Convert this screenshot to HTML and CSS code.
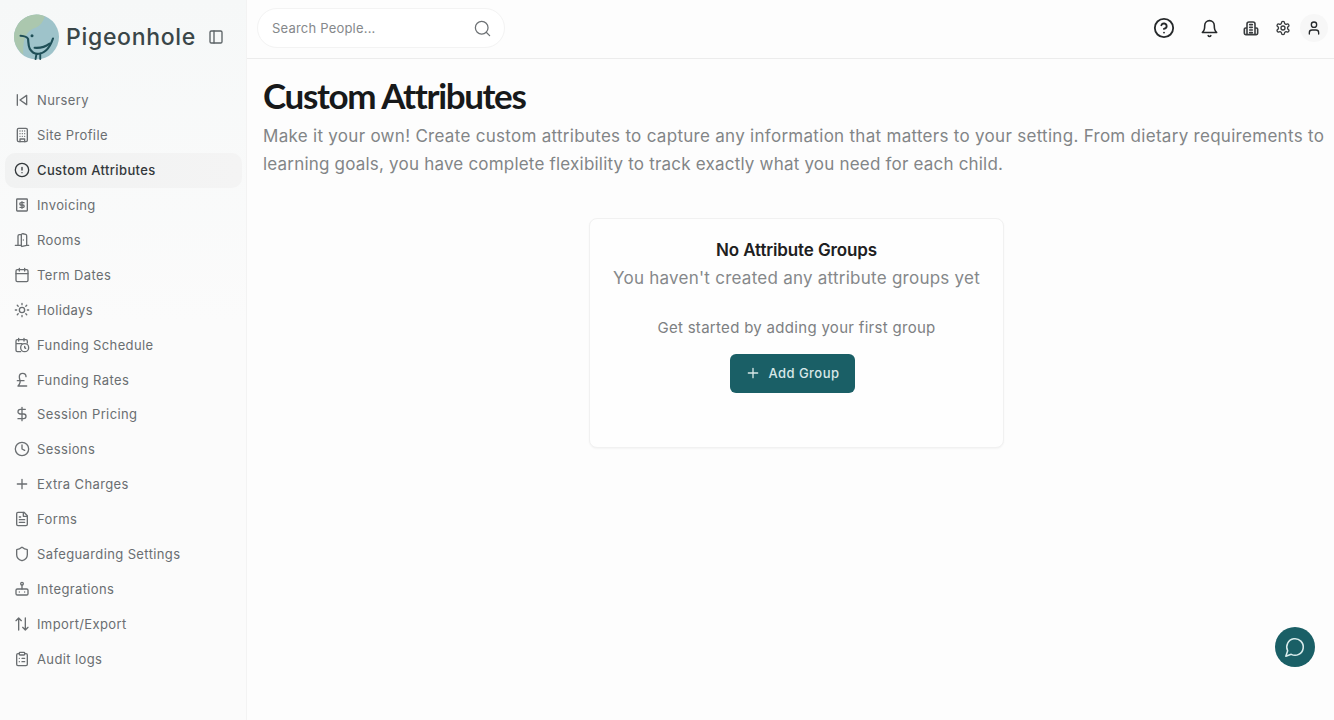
FILE: index.html
```html
<!DOCTYPE html>
<html lang="en">

<head>
    <meta charset="UTF-8">
    <meta name="viewport" content="width=device-width, initial-scale=1.0">
    <title>Custom Attributes</title>
    <link rel="stylesheet" href="styles.css">
</head>

<body>
    <div class="app">
        <aside class="sidebar">
            <div class="brand">
                <svg class="brand-logo" viewBox="0 0 48 48">
                    <circle cx="24" cy="24" r="24" fill="#9ec3ca"/>
                    <path d="M0 24A24 24 0 0 1 24 0c3 0 6 .5 9 2-2 6-5 10-10 12C14 17 9 24 10 43 4 38 0 31 0 24z" fill="#abc7ae"/>
                    <path d="M7 22.700c4 .3 7 1.300 8 3.300.5 4 0 7 2 11 2 3 5 5 8 5 7 0 13-6 16.600-16.400" fill="none" stroke="#1f4f57" stroke-width="2.300" stroke-linecap="round"/>
                    <path d="M22 35.500c6 .5 12-1.500 16-4.500" fill="none" stroke="#1f4f57" stroke-width="2.300" stroke-linecap="round"/>
                    <path d="M24 42l-1 5.500M28 41.500v6" stroke="#1f4f57" stroke-width="2" stroke-linecap="round"/>
                    <circle cx="19.200" cy="22.700" r="1.600" fill="#1f4f57"/>
                </svg>
                <span class="brand-name">Pigeonhole</span>
                <svg class="icon brand-toggle" viewBox="0 0 24 24"><rect x="3" y="3" width="18" height="18" rx="2"/><path d="M9 3v18"/></svg>
            </div>
            <ul class="nav">
                <li class="nav-item">
                    <svg class="icon" viewBox="0 0 24 24"><path d="M5 4v16"/><path d="M19 5v14l-10-7z"/></svg>
                    Nursery
                </li>
                <li class="nav-item">
                    <svg class="icon" viewBox="0 0 24 24"><rect x="5" y="2" width="15" height="20" rx="2"/><path d="M9 22v-4h7v4M9 6h.01M12.500 6h.01M16 6h.01M9 10h.01M12.500 10h.01M16 10h.01M9 14h.01M12.500 14h.01M16 14h.01"/></svg>
                    Site Profile
                </li>
                <li class="nav-item active">
                    <svg class="icon" viewBox="0 0 24 24"><circle cx="12" cy="12" r="10"/><path d="M12 8v4M12 16h.01"/></svg>
                    Custom Attributes
                </li>
                <li class="nav-item">
                    <svg class="icon" viewBox="0 0 24 24"><rect x="4" y="3" width="16" height="18" rx="1"/><path d="M15 8.500H10.500a1.750 1.750 0 0 0 0 3.500h3a1.750 1.750 0 0 1 0 3.500H9M12 7v10"/></svg>
                    Invoicing
                </li>
                <li class="nav-item">
                    <svg class="icon" viewBox="0 0 24 24"><path d="M11 20H2M11 4.600v16.100a1 1 0 0 0 1.200 1L19 20V5.600a2 2 0 0 0-1.500-2l-4-1A2 2 0 0 0 11 4.600zM11 4H8a2 2 0 0 0-2 2v14M14 12h.01M22 20h-3"/></svg>
                    Rooms
                </li>
                <li class="nav-item">
                    <svg class="icon" viewBox="0 0 24 24"><rect x="3" y="4" width="18" height="18" rx="2"/><path d="M8 2v4M16 2v4M3 10h18"/></svg>
                    Term Dates
                </li>
                <li class="nav-item">
                    <svg class="icon" viewBox="0 0 24 24"><circle cx="12" cy="12" r="4"/><path d="M12 2v2M12 20v2M4.900 4.900l1.400 1.400M17.700 17.700l1.400 1.400M2 12h2M20 12h2M6.300 17.700l-1.400 1.400M19.100 4.900l-1.400 1.400"/></svg>
                    Holidays
                </li>
                <li class="nav-item">
                    <svg class="icon" viewBox="0 0 24 24"><path d="M10 22H5a2 2 0 0 1-2-2V6a2 2 0 0 1 2-2h13a2 2 0 0 1 2 2v3M15 2v4M7 2v4M3 10h9"/><circle cx="16" cy="16" r="6"/><path d="M16 14v2l1.500 1"/></svg>
                    Funding Schedule
                </li>
                <li class="nav-item">
                    <svg class="icon" viewBox="0 0 24 24"><path d="M18 7a5 5 0 0 0-10 0c0 4 2 6 1 9-.5 2-2 4-3 5h13M5 13h10"/></svg>
                    Funding Rates
                </li>
                <li class="nav-item">
                    <svg class="icon" viewBox="0 0 24 24"><path d="M12 2v20M17 5H9.500a3.500 3.500 0 0 0 0 7h5a3.500 3.500 0 0 1 0 7H6"/></svg>
                    Session Pricing
                </li>
                <li class="nav-item">
                    <svg class="icon" viewBox="0 0 24 24"><circle cx="12" cy="12" r="10"/><path d="M12 6v6l4 2"/></svg>
                    Sessions
                </li>
                <li class="nav-item">
                    <svg class="icon" viewBox="0 0 24 24"><path d="M5 12h14M12 5v14"/></svg>
                    Extra Charges
                </li>
                <li class="nav-item">
                    <svg class="icon" viewBox="0 0 24 24"><path d="M15 2H6a2 2 0 0 0-2 2v16a2 2 0 0 0 2 2h12a2 2 0 0 0 2-2V7z"/><path d="M14 2v6h6M8 13h8M8 17h8M8 9h2"/></svg>
                    Forms
                </li>
                <li class="nav-item">
                    <svg class="icon" viewBox="0 0 24 24"><path d="M20 13c0 5-3.500 7.500-7.700 9a1 1 0 0 1-.6 0C7.500 20.500 4 18 4 13V6a1 1 0 0 1 1-1c2 0 4.500-1.200 6.200-2.700a1.200 1.200 0 0 1 1.600 0C14.500 3.800 17 5 19 5a1 1 0 0 1 1 1z"/></svg>
                    Safeguarding Settings
                </li>
                <li class="nav-item">
                    <svg class="icon" viewBox="0 0 24 24"><rect x="3" y="12" width="18" height="9" rx="2"/><path d="M12 12V6M8 16.500h.01M16 16.500h.01"/><circle cx="12" cy="4" r="2"/></svg>
                    Integrations
                </li>
                <li class="nav-item">
                    <svg class="icon" viewBox="0 0 24 24"><path d="M7 21V3M3 7l4-4 4 4M17 3v18M13 17l4 4 4-4"/></svg>
                    Import/Export
                </li>
                <li class="nav-item">
                    <svg class="icon" viewBox="0 0 24 24"><rect x="8" y="2" width="8" height="4" rx="1"/><path d="M16 4h2a2 2 0 0 1 2 2v14a2 2 0 0 1-2 2H6a2 2 0 0 1-2-2V6a2 2 0 0 1 2-2h2M12 11h4M12 16h4M8 11h.01M8 16h.01"/></svg>
                    Audit logs
                </li>
            </ul>
        </aside>

        <div class="page">
            <header class="topbar">
                <div class="search">
                    <span class="search-text">Search People...</span>
                    <svg class="icon search-icon" viewBox="0 0 24 24"><circle cx="11" cy="11" r="8"/><path d="M21 21l-4.300-4.300"/></svg>
                </div>
                <div class="top-actions">
                    <svg class="icon top-help" viewBox="0 0 24 24"><circle cx="12" cy="12" r="10"/><path d="M9.100 9a3 3 0 0 1 5.800 1c0 2-3 3-3 3M12 17h.01"/></svg>
                    <svg class="icon top-bell" viewBox="0 0 24 24"><path d="M6 8a6 6 0 0 1 12 0c0 7 3 9 3 9H3s3-2 3-9"/><path d="M10.300 21a1.900 1.900 0 0 0 3.400 0"/></svg>
                    <svg class="icon top-building" viewBox="0 0 24 24"><path d="M6 22V6a3 3 0 0 1 3-3h6a3 3 0 0 1 3 3v16M6 12H4a2 2 0 0 0-2 2v6a2 2 0 0 0 2 2h16a2 2 0 0 0 2-2v-6a2 2 0 0 0-2-2h-2M10 7h4M10 11h4M10 15h4M10 19h4"/></svg>
                    <svg class="icon top-gear" viewBox="0 0 24 24"><path d="M12.200 2h-.4a2 2 0 0 0-2 2v.2a2 2 0 0 1-1 1.700l-.4.300a2 2 0 0 1-2 0l-.2-.1a2 2 0 0 0-2.700.700l-.2.400a2 2 0 0 0 .7 2.700l.2.100a2 2 0 0 1 1 1.700v.6a2 2 0 0 1-1 1.700l-.2.100a2 2 0 0 0-.7 2.700l.2.400a2 2 0 0 0 2.700.7l.2-.1a2 2 0 0 1 2 0l.4.300a2 2 0 0 1 1 1.700v.2a2 2 0 0 0 2 2h.4a2 2 0 0 0 2-2v-.2a2 2 0 0 1 1-1.700l.4-.3a2 2 0 0 1 2 0l.2.100a2 2 0 0 0 2.700-.7l.2-.4a2 2 0 0 0-.7-2.700l-.2-.1a2 2 0 0 1-1-1.700v-.6a2 2 0 0 1 1-1.700l.2-.1a2 2 0 0 0 .7-2.700l-.2-.4a2 2 0 0 0-2.700-.7l-.2.100a2 2 0 0 1-2 0l-.4-.3a2 2 0 0 1-1-1.700V4a2 2 0 0 0-2-2z"/><circle cx="12" cy="12" r="3"/></svg>
                    <span class="avatar">
                        <svg class="icon" viewBox="0 0 24 24"><path d="M19 21v-2a4 4 0 0 0-4-4H9a4 4 0 0 0-4 4v2"/><circle cx="12" cy="7" r="4"/></svg>
                    </span>
                </div>
            </header>

            <main class="content">
                <h1 class="title">Custom Attributes</h1>
                <p class="intro"><span class="intro-first">Make it your own! Create custom attributes to capture any information that matters to your setting. From dietary requirements to</span> learning goals, you have complete flexibility to track exactly what you need for each child.</p>

                <div class="empty-wrap">
                    <section class="empty-card">
                        <h2 class="empty-title">No Attribute Groups</h2>
                        <p class="empty-sub">You haven't created any attribute groups yet</p>
                        <p class="empty-hint">Get started by adding your first group</p>
                        <button class="add-btn">
                            <svg class="icon" viewBox="0 0 24 24"><path d="M5 12h14M12 5v14"/></svg>
                            Add Group
                        </button>
                    </section>
                </div>
            </main>
        </div>
    </div>

    <button class="chat-btn">
        <svg class="icon chat-icon" viewBox="0 0 24 24"><path d="M7.900 20A9 9 0 1 0 4 16.100L2 22z"/></svg>
    </button>
</body>

</html>
```

FILE: styles.css
```css
html,
body {
    margin: 0;
    width: 100%;
    height: 100%;
}

body {
    font-family: Inter, "Liberation Sans", sans-serif;
    background: #fdfdfd;
    overflow: hidden;
}

.app {
    display: flex;
    height: 720px;
}

.icon {
    width: 16px;
    height: 16px;
    flex: none;
    fill: none;
    stroke: currentColor;
    stroke-width: 2;
    stroke-linecap: round;
    stroke-linejoin: round;
}

/* sidebar */
.sidebar {
    width: 246px;
    flex: none;
    background: linear-gradient(#f6f8f8, #fbfbfb 45%);
    border-right: 1px solid #f3f3f3;
}

.brand {
    display: flex;
    align-items: center;
    height: 60px;
    padding: 14px 0 0 14px;
    box-sizing: border-box;
}

.brand-logo {
    width: 45px;
    height: 46px;
    flex: none;
}

.brand-name {
    margin-left: 7px;
    font-size: 23px;
    font-weight: 500;
    letter-spacing: 0.7px;
    color: #3a4648;
}

.brand-toggle {
    margin-left: 12px;
    color: #5c6366;
}

.nav {
    list-style: none;
    margin: 23px 0 0;
    padding: 0 4px 0 5px;
}

.nav-item {
    display: flex;
    align-items: center;
    gap: 7px;
    height: 34.900px;
    padding-left: 9px;
    font-size: 13px;
    letter-spacing: 0.38px;
    color: #6a6e71;
    border-radius: 10px;
}

.nav-item.active {
    background: linear-gradient(90deg, #f1f2f2, #f4f4f4);
    color: #33383b;
    font-weight: 500;
}

/* top bar */
.page {
    flex: 1;
    min-width: 0;
    display: flex;
    flex-direction: column;
}

.topbar {
    display: flex;
    align-items: center;
    justify-content: space-between;
    height: 59px;
    flex: none;
    box-sizing: border-box;
    padding: 0 6px 2px 10px;
    border-bottom: 1px solid #ececec;
}

.search {
    display: flex;
    align-items: center;
    justify-content: space-between;
    width: 248px;
    height: 40px;
    box-sizing: border-box;
    padding: 0 12px 0 14px;
    background: #fff;
    border: 1px solid #f3f3f3;
    border-radius: 20px;
}

.search-text {
    font-size: 13px;
    letter-spacing: 0.2px;
    color: #85888b;
}

.search-icon {
    width: 19px;
    height: 19px;
    stroke-width: 1.600;
    color: #6d7174;
}

.top-actions {
    display: flex;
    align-items: center;
    color: #26292b;
}

.top-help {
    width: 22px;
    height: 22px;
}

.top-bell {
    width: 19px;
    height: 19px;
    margin-left: 25px;
}

.top-building {
    margin-left: 24px;
    stroke-width: 2.400;
    color: #3a3d3f;
}

.top-gear {
    margin-left: 16px;
    color: #3a3d3f;
}

.avatar {
    display: flex;
    align-items: center;
    justify-content: center;
    width: 28px;
    height: 28px;
    margin-left: 9px;
    border-radius: 50%;
    background: #f7f7f7;
}

/* content */
.content {
    flex: 1;
    padding: 16px 0 0 16px;
}

.title {
    margin: 0;
    font-family: Lato, Inter, sans-serif;
    font-size: 35px;
    line-height: 40px;
    font-weight: 700;
    letter-spacing: -1.350px;
    color: #17191a;
}

.intro {
    margin: 7px 0 0;
    width: 1068px;
    font-size: 17px;
    line-height: 28px;
    letter-spacing: 0.2px;
    color: #828587;
}

.intro-first {
    letter-spacing: 0.29px;
}

.empty-wrap {
    display: flex;
    justify-content: center;
    margin-top: 40px;
    padding-right: 4px;
}

.empty-card {
    width: 415px;
    height: 230px;
    box-sizing: border-box;
    padding-top: 20px;
    text-align: center;
    background: #fefefe;
    border: 1px solid #f1f1f1;
    border-radius: 8px;
    box-shadow: 0 1px 2px rgba(0, 0, 0, 0.04);
}

.empty-title {
    margin: 0;
    font-size: 17px;
    line-height: 22px;
    font-weight: 600;
    letter-spacing: -0.13px;
    color: #1d2021;
}

.empty-sub {
    margin: 6px 0 0;
    font-size: 17px;
    line-height: 22px;
    letter-spacing: 0.25px;
    color: #85888a;
}

.empty-hint {
    margin: 29px 0 0;
    font-size: 15px;
    line-height: 20px;
    letter-spacing: 0.3px;
    color: #7d8082;
}

.add-btn {
    display: inline-flex;
    align-items: center;
    gap: 8px;
    width: 125px;
    height: 39px;
    margin: 16px 9px 0 0;
    padding: 0 0 1px 15px;
    font-family: inherit;
    font-size: 13px;
    font-weight: 500;
    letter-spacing: 0.45px;
    color: #d8e8e8;
    background: #1a5f66;
    border: 0;
    border-radius: 6px;
}

.chat-btn {
    position: fixed;
    left: 1275px;
    top: 627px;
    display: flex;
    align-items: center;
    justify-content: center;
    width: 40px;
    height: 40px;
    padding: 0;
    color: #d9ecec;
    background: #1a5f66;
    border: 0;
    border-radius: 50%;
}

.chat-icon {
    width: 22px;
    height: 22px;
    stroke-width: 1.700;
}
```
